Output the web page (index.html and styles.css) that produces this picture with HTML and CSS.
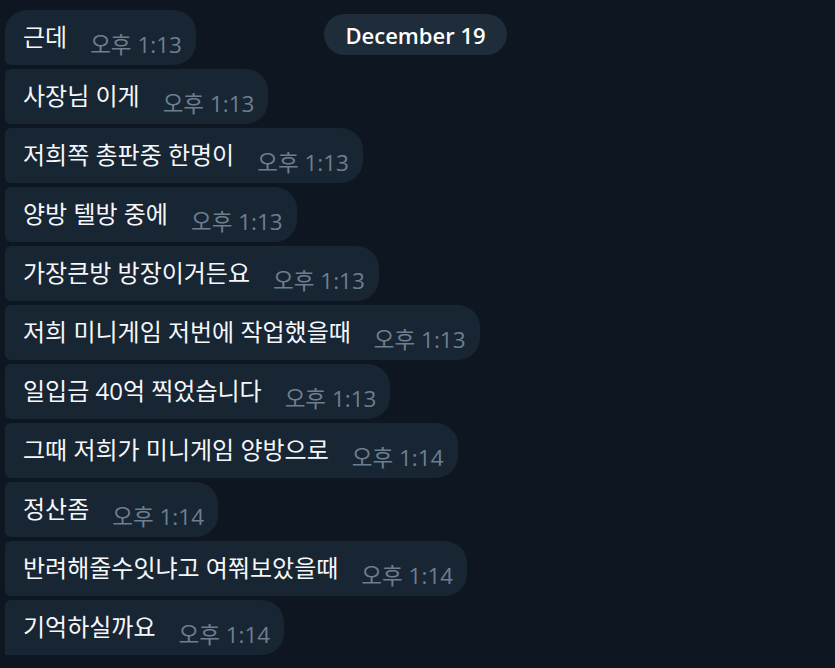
FILE: index.html
```html
<!DOCTYPE html>
<html lang="ko">
<head>
    <meta charset="UTF-8">
    <meta name="viewport" content="width=device-width, initial-scale=1.0">
    <title>Chat</title>
    <link rel="stylesheet" href="styles.css">
</head>
<body>
    <div class="chat">
        <div class="date-pill">December 19</div>

        <div class="messages">
            <div class="bubble first"><span class="text">근데</span><span class="time">오후 1:13</span></div>
            <div class="bubble"><span class="text">사장님 이게</span><span class="time">오후 1:13</span></div>
            <div class="bubble"><span class="text">저희쪽 총판중 한명이</span><span class="time">오후 1:13</span></div>
            <div class="bubble"><span class="text">양방 텔방 중에</span><span class="time">오후 1:13</span></div>
            <div class="bubble"><span class="text">가장큰방 방장이거든요</span><span class="time">오후 1:13</span></div>
            <div class="bubble"><span class="text">저희 미니게임 저번에 작업했을때</span><span class="time">오후 1:13</span></div>
            <div class="bubble"><span class="text">일입금 40억 찍었습니다</span><span class="time">오후 1:13</span></div>
            <div class="bubble"><span class="text">그때 저희가 미니게임 양방으로</span><span class="time">오후 1:14</span></div>
            <div class="bubble"><span class="text">정산좀</span><span class="time">오후 1:14</span></div>
            <div class="bubble"><span class="text">반려해줄수잇냐고 여쭤보았을때</span><span class="time">오후 1:14</span></div>
            <div class="bubble last"><span class="text">기억하실까요</span><span class="time">오후 1:14</span></div>
        </div>
    </div>
</body>
</html>
```

FILE: styles.css
```css
body {
    margin: 0;
    background-color: #0e1621;
    font-family: "Open Sans", "Noto Sans CJK KR", sans-serif;
    color: #f5f7f9;
    height: 668px;
    overflow: hidden;
}
.chat {
    position: relative;
    padding: 10px 0 0 5px;
}
.date-pill {
    position: absolute;
    left: 324px;
    top: 14px;
    width: 183px;
    height: 41px;
    border-radius: 21px;
    background: #1f2c3a;
    color: #ffffff;
    font-size: 22px;
    font-weight: 600;
    display: flex;
    align-items: center;
    justify-content: center;
}
.messages {
    display: flex;
    flex-direction: column;
    align-items: flex-start;
    gap: 4px;
}
.bubble {
    display: flex;
    align-items: center;
    height: 55px;
    box-sizing: border-box;
    padding: 0 14px 0 18px;
    background: #182533;
    border-radius: 6px 22px 22px 6px;
    font-size: 24px;
}
.bubble.first {
    border-top-left-radius: 22px;
}
.bubble.last {
    border-bottom-left-radius: 0;
}
.text {
    white-space: nowrap;
    margin-top: -4px;
}
.time {
    margin-left: 23px;
    margin-top: 12px;
    color: #6d7f8f;
    font-size: 22.5px;
    white-space: nowrap;
}
```
